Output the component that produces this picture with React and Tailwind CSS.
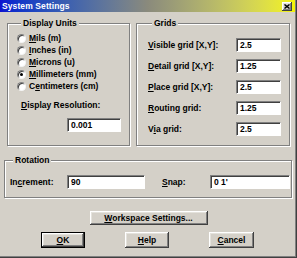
import React from 'react';

const RAISED =
  'bg-[#d4d0c8] shadow-[inset_-1px_-1px_0_#404040,inset_1px_1px_0_#ffffff,inset_-2px_-2px_0_#808080,inset_2px_2px_0_#e4e2dc]';

function U({ children }) {
  return <span className="underline underline-offset-[1px]">{children}</span>;
}

function Radio({ checked, children }) {
  return (
    <div className="flex items-center h-[12px]">
      <span className="relative flex items-center justify-center w-[9px] h-[9px] rounded-full bg-white border border-t-[#808080] border-l-[#808080] border-r-[#f4f4f4] border-b-[#f4f4f4] shadow-[inset_1px_1px_0_#404040]">
        {checked && <span className="w-[3px] h-[3px] rounded-full bg-black" />}
      </span>
      <span className="ml-[3px]">{children}</span>
    </div>
  );
}

function Field({ value, w }) {
  return (
    <div
      className={`h-[14px] bg-white border border-t-[#808080] border-l-[#808080] border-b-white border-r-white shadow-[inset_1px_1px_0_#404040] pl-[3px] pt-[1px] leading-[11px] font-bold text-black ${w}`}
    >
      {value}
    </div>
  );
}

function GridRow({ label, value }) {
  return (
    <div className="flex items-center justify-between h-[14px]">
      <span>{label}</span>
      <Field value={value} w="w-[45px]" />
    </div>
  );
}

function Btn({ children, def, w, h }) {
  return (
    <div className={`${def ? 'border border-black' : ''} ${w} ${h} flex`}>
      <div className={`flex-1 flex items-center justify-center ${RAISED}`}>{children}</div>
    </div>
  );
}

export default function App() {
  return (
    <div className="w-[297px] h-[258px] bg-[#d4d0c8] flex flex-col font-['Liberation_Sans',Arial,sans-serif] text-[8.5px] font-bold text-black leading-[10px] shadow-[inset_-1px_-1px_0_#404040,inset_-2px_-2px_0_#808080] overflow-hidden select-none">
      {/* title bar */}
      <div className="h-[12px] w-[295px] flex items-center justify-between bg-gradient-to-r from-[#1010d0] via-[#8a8a7c] to-[#f4f400] pl-[2px] pr-[3px]">
        <span className="text-white text-[8.5px] tracking-[0.1px]">System Settings</span>
        <div className={`w-[10px] h-[9px] flex items-center justify-center ${RAISED}`}>
          <svg width="6" height="5" viewBox="0 0 6 5">
            <path d="M0.5 0.5L5.5 4.5M5.5 0.5L0.5 4.5" stroke="#000" strokeWidth="1.4" />
          </svg>
        </div>
      </div>

      <div className="flex flex-col pt-[6px] px-[4px]">
        {/* top row */}
        <div className="flex pl-[3px] gap-[6px]">
          <fieldset className="w-[123px] h-[128px] border border-[#808080] shadow-[1px_1px_0_#ffffff,inset_1px_1px_0_#ffffff] pl-[9px]">
            <legend className="ml-[4px] px-[2px] bg-[#d4d0c8]">Display Units</legend>
            <div className="flex flex-col pt-[4px]">
              <Radio><U>M</U>ils (m)</Radio>
              <Radio><U>I</U>nches (in)</Radio>
              <Radio><U>M</U>icrons (u)</Radio>
              <Radio checked><U>M</U>illimeters (mm)</Radio>
              <Radio>C<U>e</U>ntimeters (cm)</Radio>
              <div className="mt-[8px] ml-[4px] h-[10px]"><U>D</U>isplay Resolution:</div>
              <div className="mt-[8px] ml-[50px]">
                <Field value="0.001" w="w-[54px]" />
              </div>
            </div>
          </fieldset>

          <fieldset className="w-[154px] h-[128px] border border-[#808080] shadow-[1px_1px_0_#ffffff,inset_1px_1px_0_#ffffff] pl-[11px] pr-[8px]">
            <legend className="ml-[4px] px-[2px] bg-[#d4d0c8]">Grids</legend>
            <div className="flex flex-col gap-[7px] pt-[10px]">
              <GridRow label={<><U>V</U>isible grid [X,Y]:</>} value="2.5" />
              <GridRow label={<><U>D</U>etail grid [X,Y]:</>} value="1.25" />
              <GridRow label={<><U>P</U>lace grid [X,Y]:</>} value="2.5" />
              <GridRow label={<><U>R</U>outing grid:</>} value="1.25" />
              <GridRow label={<>V<U>i</U>a grid:</>} value="2.5" />
            </div>
          </fieldset>
        </div>

        {/* rotation */}
        <fieldset className="mt-[9px] w-[288px] border border-[#808080] shadow-[1px_1px_0_#ffffff,inset_1px_1px_0_#ffffff] pl-[5px] pt-[10px] pb-[8px]">
          <legend className="ml-[3px] px-[2px] bg-[#d4d0c8]">Rotation</legend>
          <div className="flex items-center h-[14px]">
            <span className="w-[57px]">In<U>c</U>rement:</span>
            <Field value="90" w="w-[78px]" />
            <span className="ml-[17px] w-[48px]"><U>S</U>nap:</span>
            <Field value="0 1'" w="w-[80px]" />
          </div>
        </fieldset>

        {/* buttons */}
        <div className="flex justify-center mt-[13px]">
          <Btn w="w-[118px]" h="h-[14px]"><U>W</U>orkspace Settings...</Btn>
        </div>
        <div className="flex justify-center gap-[40px] mt-[7px] pr-[2px]">
          <Btn def w="w-[44px]" h="h-[16px]"><U>O</U>K</Btn>
          <Btn w="w-[44px]" h="h-[16px]"><U>H</U>elp</Btn>
          <Btn w="w-[45px]" h="h-[16px]"><U>C</U>ancel</Btn>
        </div>
      </div>
    </div>
  );
}
